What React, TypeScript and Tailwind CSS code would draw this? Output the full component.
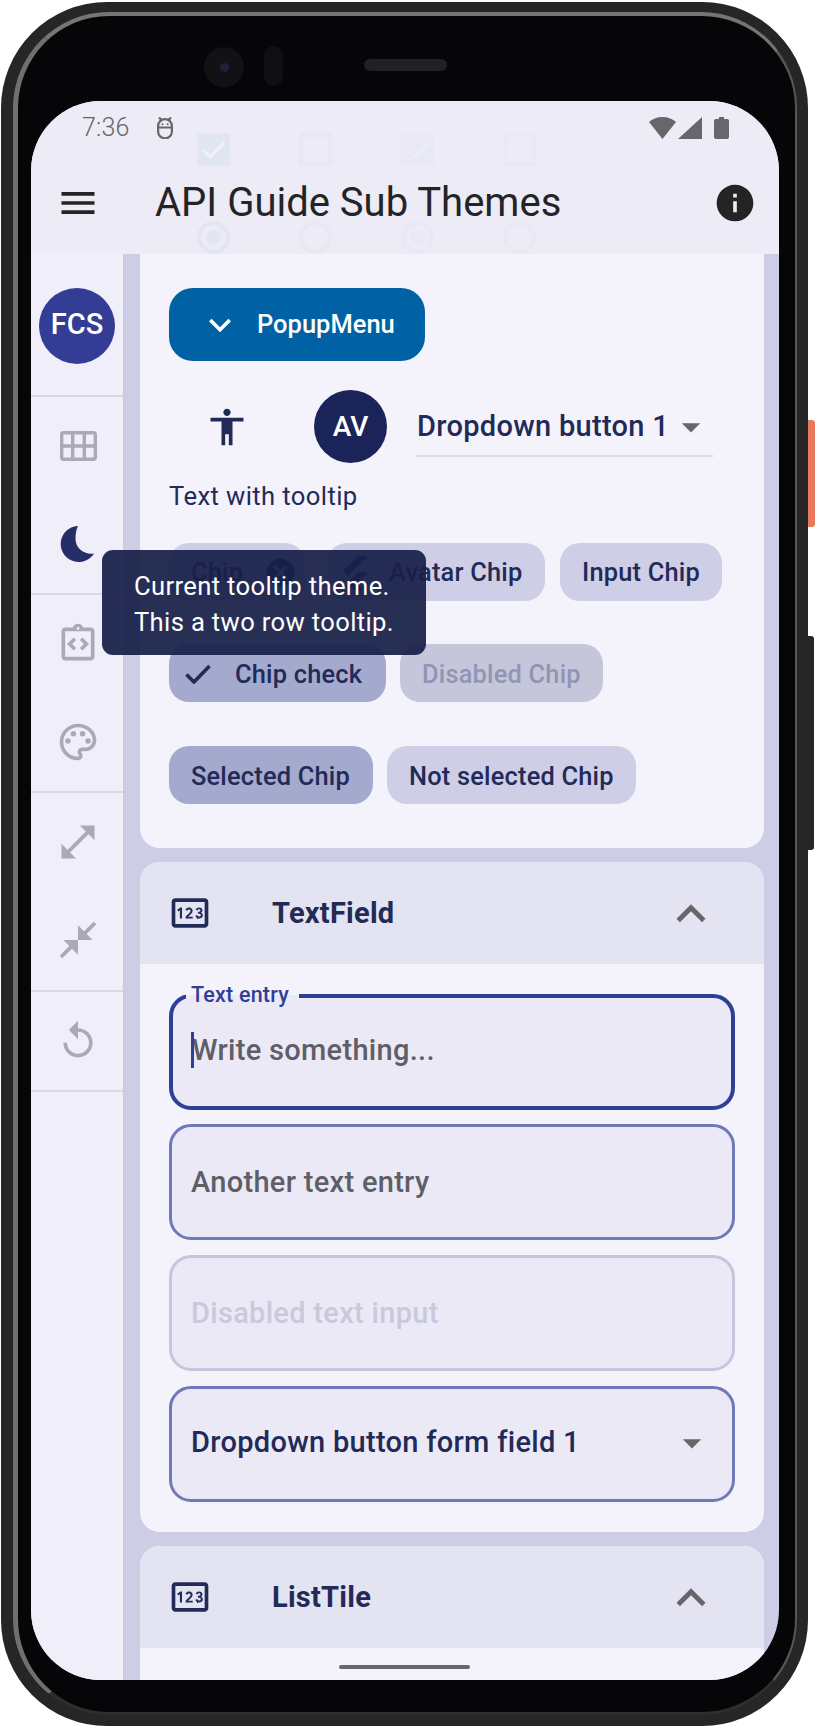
import React from 'react';
import {
  MdAccessibility,
  MdArrowDropDown,
  MdCancel,
  MdCheck,
  MdCloseFullscreen,
  MdExpandLess,
  MdExpandMore,
  MdInfo,
  MdMenu,
  MdOpenInFull,
  MdOutlineIntegrationInstructions,
  MdOutlinePalette,
  MdOutlinePin,
  MdReplay,
} from 'react-icons/md';

const GridIcon: React.FC = () => (
  <svg width="37" height="30" viewBox="0 0 37 30" fill="none" stroke="currentColor" strokeWidth="3.4">
    <rect x="1.7" y="1.7" width="33.6" height="26.6" rx="2" />
    <path d="M1.5 15h34M12.7 1.5v27M24.3 1.5v27" />
  </svg>
);

const MoonIcon: React.FC = () => (
  <svg width="36" height="36" viewBox="0 0 36 36" fill="currentColor">
    <path d="M18 0A18 18 0 1 0 34 27.5C24 29 15.5 22 15.5 13 15.5 8 16 4 18 0Z" />
  </svg>
);

const AdbIcon: React.FC = () => (
  <svg width="18" height="22" viewBox="0 0 18 22" fill="none" stroke="currentColor" strokeWidth="2.2">
    <path d="M2.1 9a6.9 6.9 0 0 1 13.8 0v5.5a6.9 6.9 0 0 1-13.8 0ZM2 10.5h14M3 .5l2.4 2.6M15 .5l-2.4 2.6" />
    <circle cx="6.4" cy="7.2" r="1" fill="currentColor" stroke="none" />
    <circle cx="11.6" cy="7.2" r="1" fill="currentColor" stroke="none" />
  </svg>
);

const CheckIcon: React.FC = () => (
  <svg width="26" height="20" viewBox="0 0 26 20" fill="none" stroke="currentColor" strokeWidth="3.6">
    <path d="M1.5 10.5 9 18 24.5 2" />
  </svg>
);

const SideDivider: React.FC<{ children: React.ReactNode; h: string }> = ({ children, h }) => (
  <div className={`flex flex-col border-b-2 border-[#d8d7e4] ${h}`}>{children}</div>
);

const RailButton: React.FC<{ children: React.ReactNode; dark?: boolean }> = ({ children, dark }) => (
  <div className={`flex h-[98px] items-center justify-center pl-[2px] ${dark ? 'text-[#262e68]' : 'text-[#aaa9b5]'}`}>
    {children}
  </div>
);

const Chip: React.FC<{ className: string; children: React.ReactNode }> = ({ className, children }) => (
  <div className={`flex h-[58px] items-center rounded-[20px] text-[25.4px] font-medium tracking-[0.2px] ${className}`}>
    {children}
  </div>
);

const Field: React.FC<{ className: string; children: React.ReactNode }> = ({ className, children }) => (
  <div className={`relative flex h-[116px] items-center rounded-[22px] bg-[#ebe9f5] pl-[19px] text-[29px] font-medium tracking-[0.3px] ${className}`}>
    {children}
  </div>
);

const SectionHeader: React.FC<{ title: string }> = ({ title }) => (
  <div className="flex h-[102px] items-center rounded-t-[20px] bg-[#e4e3f1] pl-[28px] text-[#222a58]">
    <MdOutlinePin size={44} />
    <span className="ml-[60px] pt-[2px] text-[29px] font-bold tracking-[0.25px]">{title}</span>
    <MdExpandLess size={58} className="ml-auto mr-[44px] mt-[1px] text-[#666669]" />
  </div>
);

const GhostControls: React.FC<{ left: string; checked?: boolean; opacity?: string }> = ({ left, checked, opacity }) => (
  <div className={`absolute top-[32px] flex flex-col ${left} ${opacity ?? ''}`}>
    <div className={`flex h-[33px] w-[33px] items-center justify-center rounded-[2px] ${checked ? 'bg-[#e2e6f3]' : 'border-[4px] border-[#e8e8f3]'}`}>
      {checked && <MdCheck size={30} className="text-[#f2f2fb]" />}
    </div>
    <div className={`mt-[55px] flex h-[33px] w-[33px] items-center justify-center rounded-full border-[4px] ${checked ? 'border-[#e2e6f3]' : 'border-[#e8e8f3]'}`}>
      {checked && <div className="h-[15px] w-[15px] rounded-full bg-[#e2e6f3]" />}
    </div>
  </div>
);

const App: React.FC = () => {
  return (
    <div className="relative h-[1727px] w-[815px] overflow-hidden bg-white font-['Roboto',sans-serif]">
      {/* side keys */}
      <div className="absolute left-[800px] top-[420px] h-[107px] w-[15px] rounded-r-[3px] bg-[#e8795c]" />
      <div className="absolute left-[800px] top-[636px] h-[214px] w-[14px] rounded-r-[3px] bg-[#262626]" />

      {/* phone body */}
      <div className="absolute left-[1px] top-[2px] h-[1724px] w-[807px] rounded-[106px] bg-[#262626] pb-[11px] pl-[12px] pr-[11px] pt-[10px]">
        <div className="h-full w-full rounded-[96px] border-b-[3px] border-l-[5px] border-r-[2px] border-t-[4px] border-b-[#2e2e2e] border-l-[#707070] border-r-[#565656] border-t-[#757575] bg-[#060608] pb-[30px] pl-[13px] pr-[15px] pt-[85px]">
          {/* lens and speaker */}
          <div className="absolute left-[203px] top-[45px] flex h-[40px] w-[40px] items-center justify-center rounded-full bg-[#121216]">
            <div className="h-[9px] w-[9px] rounded-full bg-[#1c2238]" />
          </div>
          <div className="absolute left-[263px] top-[44px] h-[40px] w-[19px] rounded-full bg-[#101013]" />
          <div className="absolute left-[363px] top-[57px] h-[12px] w-[83px] rounded-full bg-[#212124]" />

          {/* screen */}
          <div className="relative h-[1579px] w-[748px] overflow-hidden rounded-[70px] bg-[#cdcde6]">
            {/* app bar */}
            <div className="relative h-[153px] bg-[#ecebf6]">
              <GhostControls left="left-[166px]" checked />
              <GhostControls left="left-[268px]" />
              <GhostControls left="left-[370px]" checked opacity="opacity-30" />
              <GhostControls left="left-[472px]" opacity="opacity-50" />
              <div className="relative flex h-[54px] items-center pl-[51px] pr-[50px] text-[#66666b]">
                <span className="text-[25px] font-light tracking-[0.2px]">7:36</span>
                <span className="ml-[26px] flex">
                  <AdbIcon />
                </span>
                <svg className="ml-auto" width="27" height="22" viewBox="0 0 27 22" fill="currentColor">
                  <path d="M13.5 22 0 5C3 2 8 0 13.5 0S24 2 27 5Z" />
                </svg>
                <svg className="ml-[2px]" width="24" height="22" viewBox="0 0 24 22" fill="currentColor">
                  <path d="M24 0v22H0Z" />
                </svg>
                <svg className="ml-[12px]" width="15" height="22" viewBox="0 0 15 22" fill="currentColor">
                  <path d="M5 0h5v2h3a2 2 0 0 1 2 2v16a2 2 0 0 1-2 2H2a2 2 0 0 1-2-2V4a2 2 0 0 1 2-2h3Z" />
                </svg>
              </div>
              <div className="relative flex h-[96px] items-center pl-[25px] pr-[22px] text-[#242424]">
                <MdMenu size={44} />
                <h1 className="ml-[55px] text-[40px] font-normal leading-none">API Guide Sub Themes</h1>
                <MdInfo size={44} className="ml-auto" />
              </div>
            </div>

            {/* body */}
            <div className="flex">
              {/* rail */}
              <div className="h-[1426px] w-[93px] border-r border-[#c6c6dc] bg-[#efeef9]">
                <div className="flex h-[143px] items-start justify-center border-b-2 border-[#d8d7e4] pt-[34px]">
                  <div className="flex h-[76px] w-[76px] items-center justify-center rounded-full bg-[#333d96] pb-[2px] text-[29px] font-medium text-white">
                    FCS
                  </div>
                </div>
                <SideDivider h="h-[198px]">
                  <RailButton><GridIcon /></RailButton>
                  <RailButton dark><MoonIcon /></RailButton>
                </SideDivider>
                <SideDivider h="h-[198px]">
                  <RailButton><MdOutlineIntegrationInstructions size={44} /></RailButton>
                  <RailButton><MdOutlinePalette size={44} /></RailButton>
                </SideDivider>
                <SideDivider h="h-[199px]">
                  <RailButton><MdOpenInFull size={44} /></RailButton>
                  <RailButton><MdCloseFullscreen size={44} /></RailButton>
                </SideDivider>
                <SideDivider h="h-[100px]">
                  <RailButton><MdReplay size={44} /></RailButton>
                </SideDivider>
              </div>

              {/* panels */}
              <div className="ml-[16px] w-[624px]">
                <div className="h-[594px] rounded-b-[20px] bg-[#f4f3fb] pl-[29px] pt-[34px]">
                  <div className="flex h-[73px] w-[256px] items-center rounded-[24px] bg-[#0061a4] pl-[29px] text-[25.5px] font-medium text-white">
                    <MdExpandMore size={44} />
                    <span className="ml-[15px]">PopupMenu</span>
                  </div>
                  <div className="mt-[29px] flex h-[73px] items-center">
                    <MdAccessibility size={44} className="ml-[36px] text-[#222a58]" />
                    <div className="ml-[65px] flex h-[73px] w-[73px] items-center justify-center rounded-full bg-[#1a2458] text-[28px] font-medium text-white">
                      AV
                    </div>
                    <div className="relative ml-[29px] flex h-[60px] w-[297px] items-center border-b-2 border-[#dcdce2] pl-[1px] pt-[2px] text-[29px] font-medium tracking-[0.3px] text-[#222a58]">
                      Dropdown button 1
                      <MdArrowDropDown size={44} className="absolute right-0 text-[#66666b]" />
                    </div>
                  </div>
                  <div className="mt-[18px] h-[30px] text-[25.6px] leading-[30px] tracking-[0.4px] text-[#222a58]">Text with tooltip</div>
                  <div className="mt-[32px] flex gap-[15px]">
                    <Chip className="w-[136px] bg-[#cecee6] pl-[22px] pt-[1px] text-[#222a58]">
                      Chip
                      <MdCancel size={33} className="ml-[21px]" />
                    </Chip>
                    <Chip className="ml-[7px] w-[218px] bg-[#cecee6] pl-[13px] pt-[1px] text-[#222a58]">
                      <svg width="30" height="34" viewBox="0 0 30 34" fill="#1d2f6f">
                        <path d="M18 0h10L8 20 3 15ZM18 16h10L17 27l6 7H13l-6-7Z" />
                      </svg>
                      <span className="ml-[19px]">Avatar Chip</span>
                    </Chip>
                    <Chip className="w-[162px] bg-[#cecee6] pl-[22px] pt-[1px] text-[#222a58]">Input Chip</Chip>
                  </div>
                  <div className="mt-[43px] flex gap-[14px]">
                    <Chip className="w-[217px] bg-[#a4a9ce] pl-[16px] pt-[2px] text-[#222a58]">
                      <CheckIcon />
                      <span className="ml-[24px]">Chip check</span>
                    </Chip>
                    <Chip className="w-[203px] bg-[#c6c6da] pl-[22px] pt-[2px] text-[#9195b5]">Disabled Chip</Chip>
                  </div>
                  <div className="mt-[44px] flex gap-[14px]">
                    <Chip className="w-[204px] bg-[#a4a9ce] pl-[22px] pt-[2px] text-[#222a58]">Selected Chip</Chip>
                    <Chip className="w-[249px] bg-[#cecee6] pl-[22px] pt-[2px] text-[#222a58]">Not selected Chip</Chip>
                  </div>
                </div>

                <div className="mt-[14px] h-[670px] rounded-[20px] bg-[#f4f3fb]">
                  <SectionHeader title="TextField" />
                  <div className="px-[29px] pt-[30px]">
                    <Field className="border-4 border-[#303f96] pb-[2px] text-[#5f5e66]">
                      <span className="absolute left-[13px] top-[-16px] bg-[linear-gradient(to_bottom,#f4f3fb_50%,#ebe9f5_50%)] pl-[5px] pr-[10px] text-[21.5px] font-medium leading-[26px] tracking-[0.2px] text-[#303f96]">
                        Text entry
                      </span>
                      <span className="absolute left-[18px] top-[34px] h-[36px] w-[3px] bg-[#303f96]" />
                      Write something...
                    </Field>
                    <Field className="mt-[14px] border-[3px] border-[#7079b8] pt-[2px] text-[#5f5e66]">Another text entry</Field>
                    <Field className="mt-[15px] border-[3px] border-[#c5c6dc] pt-[2px] text-[#c9c9de]">Disabled text input</Field>
                    <Field className="mt-[15px] border-[3px] border-[#7079b8] pb-[2px] text-[#222a58]">
                      Dropdown button form field 1
                      <MdArrowDropDown size={44} className="absolute right-[18px] text-[#66666b]" />
                    </Field>
                  </div>
                </div>

                <div className="mt-[14px] h-[200px] rounded-[20px] bg-[#f4f3fb]">
                  <SectionHeader title="ListTile" />
                </div>
              </div>
            </div>

            {/* home indicator */}
            <div className="absolute bottom-[11px] left-[308px] h-[4px] w-[131px] rounded-full bg-[#66666b]" />

            {/* tooltip */}
            <div className="absolute left-[71px] top-[449px] h-[105px] w-[324px] rounded-[11px] bg-[#181f48]/[.93] pl-[32px] pt-[18px] text-[25.6px] leading-[36px] tracking-[0.35px] text-white">
              Current tooltip theme.
              <br />
              This a two row tooltip.
            </div>
          </div>
        </div>
      </div>
    </div>
  );
};

export default App;
